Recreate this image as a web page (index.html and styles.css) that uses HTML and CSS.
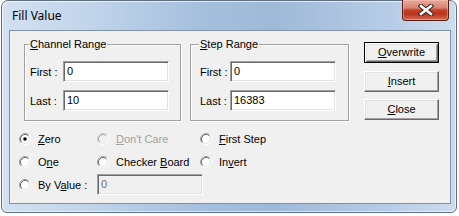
FILE: index.html
```html
<!DOCTYPE html>
<html>
<head>
<meta charset="utf-8">
<link rel="stylesheet" href="styles.css">
</head>
<body>
<div class="window">
  <div class="titlebar">
    <span class="title">Fill Value</span>
    <div class="close-btn">
      <svg width="16" height="12" viewBox="0 0 16 12">
        <path d="M3 2 L13 10 M13 2 L3 10" stroke="#3b2320" stroke-width="4.6" stroke-linecap="square" fill="none"/>
        <path d="M3 2 L13 10 M13 2 L3 10" stroke="#ffffff" stroke-width="2.6" stroke-linecap="square" fill="none"/>
      </svg>
    </div>
  </div>
  <div class="client">
    <div class="top">
      <div class="group group-channel">
        <span class="legend"><u>C</u>hannel Range</span>
        <div class="row"><span class="lbl lbl-c">First :</span><div class="input">0</div></div>
        <div class="row"><span class="lbl lbl-c">Last :</span><div class="input">10</div></div>
      </div>
      <div class="group group-step">
        <span class="legend"><u>S</u>tep Range</span>
        <div class="row"><span class="lbl lbl-s">First :</span><div class="input">0</div></div>
        <div class="row"><span class="lbl lbl-s">Last :</span><div class="input">16383</div></div>
      </div>
      <div class="buttons">
        <div class="btn default"><u>O</u>verwrite</div>
        <div class="btn b2"><u>I</u>nsert</div>
        <div class="btn b3"><u>C</u>lose</div>
      </div>
    </div>
    <div class="radios">
      <div class="radio"><svg class="rb" width="12" height="12" viewBox="0 0 12 12"><use href="#r-base"/><circle cx="6" cy="6" r="1.8" fill="#000"/></svg><span><u>Z</u>ero</span></div>
      <div class="radio disabled"><svg class="rb" width="12" height="12" viewBox="0 0 12 12"><use href="#r-dis"/></svg><span><u>D</u>on't Care</span></div>
      <div class="radio"><svg class="rb" width="12" height="12" viewBox="0 0 12 12"><use href="#r-base"/></svg><span><u>F</u>irst Step</span></div>
      <div class="radio"><svg class="rb" width="12" height="12" viewBox="0 0 12 12"><use href="#r-base"/></svg><span>O<u>n</u>e</span></div>
      <div class="radio"><svg class="rb" width="12" height="12" viewBox="0 0 12 12"><use href="#r-base"/></svg><span>Checker <u>B</u>oard</span></div>
      <div class="radio"><svg class="rb" width="12" height="12" viewBox="0 0 12 12"><use href="#r-base"/></svg><span>In<u>v</u>ert</span></div>
      <div class="radio"><svg class="rb" width="12" height="12" viewBox="0 0 12 12"><use href="#r-base"/></svg><span>By V<u>a</u>lue :</span></div>
      <div class="input input-dis">0</div>
    </div>
  </div>
</div>
<svg width="0" height="0" class="defs">
  <defs>
    <g id="r-base">
      <circle cx="6" cy="6" r="4.5" fill="#ffffff"/>
      <path d="M9.89 2.11 A5.5 5.5 0 0 0 2.11 9.89" stroke="#a0a0a0" stroke-width="1" fill="none"/>
      <path d="M2.11 9.89 A5.5 5.5 0 0 0 9.89 2.11" stroke="#ffffff" stroke-width="1" fill="none"/>
      <path d="M9.18 2.82 A4.5 4.5 0 0 0 2.82 9.18" stroke="#696969" stroke-width="1" fill="none"/>
      <path d="M2.82 9.18 A4.5 4.5 0 0 0 9.18 2.82" stroke="#e3e3e3" stroke-width="1" fill="none"/>
    </g>
    <g id="r-dis">
      <circle cx="6" cy="6" r="4.5" fill="#f0f0f0"/>
      <path d="M9.89 2.11 A5.5 5.5 0 0 0 2.11 9.89" stroke="#c8c8c8" stroke-width="1" fill="none"/>
      <path d="M2.11 9.89 A5.5 5.5 0 0 0 9.89 2.11" stroke="#ffffff" stroke-width="1" fill="none"/>
      <path d="M9.18 2.82 A4.5 4.5 0 0 0 2.82 9.18" stroke="#a8a8a8" stroke-width="1" fill="none"/>
      <path d="M2.82 9.18 A4.5 4.5 0 0 0 9.18 2.82" stroke="#ececec" stroke-width="1" fill="none"/>
    </g>
  </defs>
</svg>
</body>
</html>
```
FILE: styles.css
```css
html, body {
  margin: 0;
  padding: 0;
  background: #ffffff;
}
body {
  font-family: "Liberation Sans", Arial, sans-serif;
  font-size: 11px;
  color: #000;
}
.defs {
  position: absolute;
  width: 0;
  height: 0;
}
.window {
  box-sizing: border-box;
  width: 456px;
  height: 213px;
  margin-left: 1px;
  border: 1px solid #5f6f82;
  border-radius: 7px 7px 6px 6px;
  background: linear-gradient(90deg, #d3e1f1 0%, #c0d4ea 20%, #a4bedd 45%, #9fb9d9 60%, #b6cce6 85%, #cddcee 100%);
  box-shadow: inset 1px 1px rgba(255,255,255,0.7), inset -1px -1px rgba(255,255,255,0.6);
  padding: 0 5px 8px 7px;
  display: flex;
  flex-direction: column;
}
.titlebar {
  height: 29px;
  display: flex;
  justify-content: space-between;
  align-items: flex-start;
  flex: none;
}
.title {
  font-family: "Noto Sans", "Open Sans", sans-serif;
  font-size: 12px;
  color: #000;
  margin: 7px 0 0 3px;
  line-height: 16px;
}
.close-btn {
  box-sizing: border-box;
  width: 47px;
  height: 21px;
  margin: -1px 2px 0 0;
  border: 1px solid #521e16;
  border-top: none;
  border-radius: 0 0 4px 4px;
  background: linear-gradient(180deg, #e9aa9b 0%, #d78471 40%, #c2412b 50%, #b9351f 70%, #d66c54 100%);
  box-shadow: inset 0 0 0 1px rgba(255,200,190,0.45);
  display: flex;
  align-items: center;
  justify-content: center;
}
.close-btn svg {
  display: block;
}
.client {
  flex: 1;
  background: #f0f0f0;
  border: 1px solid #7f92a8;
  padding: 0 0 0 9px;
}
.top {
  display: flex;
  align-items: flex-start;
}
.group {
  box-sizing: border-box;
  border: 1px solid #a0a0a0;
  box-shadow: inset 1px 1px #ffffff, 1px 1px #ffffff;
  margin-top: 13px;
  padding: 0 0 9px 0;
}
.group-channel {
  width: 157px;
  margin-left: 5px;
  padding-left: 5px;
}
.group-step {
  width: 159px;
  margin-left: 9px;
  padding-left: 9px;
}
.legend {
  display: block;
  width: max-content;
  line-height: 13px;
  margin: -7px 0 10px -1px;
  padding: 0 1px;
  background: #f0f0f0;
}
.row {
  display: flex;
  align-items: center;
  height: 21px;
}
.row + .row {
  margin-top: 8px;
}
.lbl-c {
  width: 33px;
}
.lbl-s {
  width: 30px;
}
.input {
  box-sizing: border-box;
  width: 106px;
  height: 21px;
  background: #ffffff;
  border: 1px solid;
  border-color: #a0a0a0 #ffffff #ffffff #a0a0a0;
  box-shadow: inset 1px 1px #696969, inset -1px -1px #e3e3e3;
  padding: 0 0 0 3px;
  line-height: 19px;
}
.input-dis {
  background: #f0f0f0;
  color: #6d6d6d;
  height: 21px;
}
.buttons {
  margin: 11px 0 0 15px;
  display: flex;
  flex-direction: column;
}
.btn {
  box-sizing: border-box;
  width: 75px;
  height: 21px;
  background: #f0f0f0;
  border: 1px solid;
  border-color: #ffffff #696969 #696969 #ffffff;
  box-shadow: inset -1px -1px #a0a0a0, inset 1px 1px #e3e3e3;
  text-align: center;
  line-height: 19px;
}
.btn.default {
  border-color: #000;
  box-shadow: inset 1px 1px #ffffff, inset -1px -1px #696969, inset 2px 2px #e3e3e3, inset -2px -2px #a0a0a0;
}
.btn.b2 {
  margin-top: 8px;
}
.btn.b3 {
  margin-top: 7px;
}
u {
  text-decoration-thickness: 1px;
  text-underline-offset: 1px;
}
.radios {
  display: grid;
  grid-template-columns: 78px 103px 1fr;
  grid-auto-rows: 23px;
  align-items: center;
  margin-top: 6px;
}
.radio {
  display: flex;
  align-items: center;
  gap: 7px;
  white-space: nowrap;
}
.radio.disabled {
  color: #a0a0a0;
}
.rb {
  display: block;
  flex: none;
}
```
